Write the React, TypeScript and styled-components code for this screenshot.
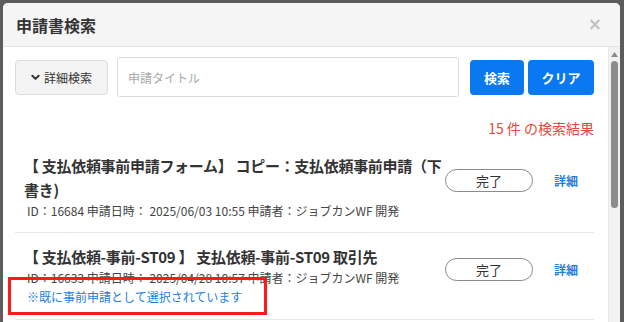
import * as React from 'react';
import styled, { createGlobalStyle } from 'styled-components';

const GlobalStyle = createGlobalStyle`
  html, body {
    margin: 0;
    padding: 0;
    background: #5c5c5c;
    height: 100%;
    overflow: hidden;
  }
  body {
    font-family: "Noto Sans CJK JP", "Noto Sans", sans-serif;
    color: #333;
  }
`;

const Backdrop = styled.div`
  height: 322px;
  padding: 3px 4px 0 3px;
  box-sizing: border-box;
`;

const Modal = styled.div`
  background: #fff;
  border-radius: 5px 5px 0 0;
  display: flex;
  flex-direction: column;
  height: 319px;
  overflow: hidden;
  width: 617px;
`;

const Header = styled.div`
  align-items: center;
  background: #f5f5f5;
  border-bottom: 1px solid #e4e4e4;
  box-sizing: border-box;
  display: flex;
  flex: 0 0 44px;
  justify-content: space-between;
  padding: 0 18px 0 13px;
`;

const Title = styled.h1`
  color: #333;
  font-size: 16px;
  font-weight: 700;
  margin: 0;
`;

const Close = styled.span`
  color: #c2c2c2;
  font-family: "DejaVu Sans", sans-serif;
  font-size: 17px;
  font-weight: 700;
  line-height: 1;
`;

const Body = styled.div`
  display: flex;
  flex: 1;
  min-height: 0;
`;

const Content = styled.div`
  flex: 1;
  padding: 10px 14px 0 12px;
  position: relative;
`;

const SearchRow = styled.div`
  align-items: center;
  display: flex;
`;

const ToggleButton = styled.button`
  align-items: center;
  background: #f4f4f4;
  border: 1px solid #dcdcdc;
  border-radius: 4px;
  color: #333;
  display: flex;
  font-family: inherit;
  font-size: 12px;
  gap: 4px;
  height: 35px;
  justify-content: center;
  margin-right: 9px;
  padding: 0;
  width: 93px;
`;

const SearchInput = styled.input`
  border: 1px solid #dcdcdc;
  border-radius: 3px;
  box-sizing: border-box;
  flex: 1;
  font-family: inherit;
  font-size: 12px;
  height: 40px;
  margin-right: 7px;
  padding: 0 10px;
  &::placeholder {
    color: #a9a9a9;
  }
`;

const PrimaryButton = styled.button<{ $w: number }>`
  background: #0a79f1;
  border: none;
  border-radius: 4px;
  color: #fff;
  font-family: inherit;
  font-size: 13px;
  font-weight: 700;
  height: 35px;
  margin-left: 4px;
  padding: 0;
  width: ${(p) => p.$w}px;
  &:first-of-type {
    margin-left: 0;
  }
`;

const ResultCount = styled.div`
  color: #e8473b;
  font-size: 14px;
  line-height: 20px;
  margin-top: 21px;
  text-align: right;
`;

const List = styled.div`
  margin-top: 4px;
`;

const Item = styled.div`
  align-items: center;
  border-bottom: 1px solid #e6e6e6;
  display: flex;
  padding: 12px 16px 12px 12px;
  position: relative;
`;

const ItemMain = styled.div`
  flex: 1;
  min-width: 0;
`;

const ItemTitle = styled.div`
  color: #333;
  font-size: 15px;
  font-weight: 700;
  letter-spacing: -0.3px;
  line-height: 24px;
  margin-left: -3px;
`;

const ItemInfo = styled.div`
  color: #444;
  font-size: 12px;
  line-height: 18px;
`;

const Notice = styled.div`
  color: #1c7fe6;
  font-size: 12px;
  line-height: 20px;
`;

const Side = styled.div`
  align-items: center;
  display: flex;
  margin-bottom: 14px;
`;

const StatusPill = styled.span`
  border: 1px solid #8a8a8a;
  border-radius: 12px;
  box-sizing: border-box;
  color: #333;
  font-size: 13px;
  height: 23px;
  line-height: 21px;
  margin-right: 21px;
  text-align: center;
  width: 88px;
`;

const DetailLink = styled.a`
  color: #1c7fe6;
  font-size: 12px;
  font-weight: 700;
  text-decoration: none;
`;

const Highlight = styled.div`
  border: 3px solid #ff1a1a;
  box-sizing: border-box;
  height: 38px;
  left: -7px;
  position: absolute;
  top: 44px;
  width: 259px;
`;

const Scrollbar = styled.div`
  background: #f1f1f1;
  border-left: 1px solid #e8e8e8;
  display: flex;
  flex: 0 0 11px;
  flex-direction: column;
  align-items: center;
  padding-top: 5px;
`;

const Thumb = styled.div`
  background: #8c8c8c;
  border-radius: 4px;
  height: 147px;
  margin-top: 4px;
  width: 7px;
`;

const Chevron = () => (
  <svg width="9" height="9" viewBox="0 0 10 10">
    <path d="M1.5 3 L5 6.5 L8.5 3" fill="none" stroke="#333" strokeWidth="2.2" strokeLinecap="round" strokeLinejoin="round" />
  </svg>
);

const ArrowUp = () => (
  <svg width="7" height="5" viewBox="0 0 7 5">
    <path d="M3.5 0 L7 5 L0 5 Z" fill="#8c8c8c" />
  </svg>
);

const results = [
  {
    title: '【 支払依頼事前申請フォーム】 コピー：支払依頼事前申請（下書き)',
    info: 'ID：16684 申請日時： 2025/06/03 10:55 申請者：ジョブカンWF 開発',
    selected: false,
  },
  {
    title: '【 支払依頼-事前-ST09 】 支払依頼-事前-ST09 取引先',
    info: 'ID：16633 申請日時： 2025/04/28 10:57 申請者：ジョブカンWF 開発',
    selected: true,
  },
];

const App: React.FC = () => (
  <Backdrop>
    <GlobalStyle />
    <Modal>
      <Header>
        <Title>申請書検索</Title>
        <Close>×</Close>
      </Header>
      <Body>
        <Content>
          <SearchRow>
            <ToggleButton>
              <Chevron />
              詳細検索
            </ToggleButton>
            <SearchInput placeholder="申請タイトル" />
            <PrimaryButton $w={54}>検索</PrimaryButton>
            <PrimaryButton $w={66}>クリア</PrimaryButton>
          </SearchRow>
          <ResultCount>15 件 の検索結果</ResultCount>
          <List>
            {results.map((r) => (
              <Item key={r.info}>
                <ItemMain>
                  <ItemTitle>{r.title}</ItemTitle>
                  <ItemInfo>{r.info}</ItemInfo>
                  {r.selected && <Notice>※既に事前申請として選択されています</Notice>}
                </ItemMain>
                <Side>
                  <StatusPill>完了</StatusPill>
                  <DetailLink href="#">詳細</DetailLink>
                </Side>
                {r.selected && <Highlight />}
              </Item>
            ))}
          </List>
        </Content>
        <Scrollbar>
          <ArrowUp />
          <Thumb />
        </Scrollbar>
      </Body>
    </Modal>
  </Backdrop>
);

export default App;
